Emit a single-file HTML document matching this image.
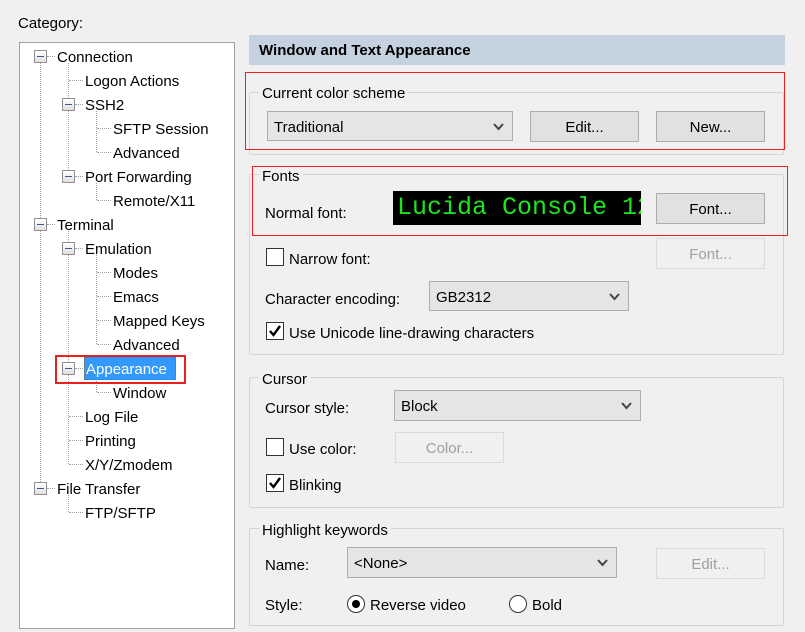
<!DOCTYPE html>
<html><head><meta charset="utf-8"><style>
*{margin:0;padding:0;box-sizing:border-box}
body{width:805px;height:632px;background:#f0f0f0;position:relative;overflow:hidden;font-family:"Liberation Sans","DejaVu Sans",sans-serif;font-size:15px;color:#000}
.a{position:absolute;white-space:nowrap}
.x{margin-top:2px}
.t{position:absolute;white-space:nowrap;line-height:20px;height:20px;margin-top:2px}
.vl{position:absolute;border-left:1px dotted #a0a0a0;width:0}
.hl{position:absolute;border-top:1px dotted #a0a0a0;height:0}
.mb{position:absolute;width:13px;height:13px;border:1px solid #919191;background:linear-gradient(#fff,#e0e0e0)}
.mb:after{content:"";position:absolute;left:2px;top:5px;width:7px;height:1px;background:#3c5a8c}
.grp{position:absolute;border:1px solid #d5d5d5;border-radius:2px}
.lg{position:absolute;background:#f0f0f0;padding:0 3px;line-height:18px;margin-top:2px}
.btn{position:absolute;border:1px solid #adadad;background:#e1e1e1;text-align:center;line-height:32px}
.dis{border-color:#dadada;background:#f0f0f0;color:#a0a0a0}
.cb{position:absolute;border:1px solid #adadad;background:#e5e5e5;line-height:32px;padding-left:6px}
.cb svg{position:absolute;right:8px;top:11px}
.ck{position:absolute;width:18px;height:18px;border:1px solid #333;background:#fff}
.red{position:absolute;border:1px solid #f02020}
</style></head><body>
<div class="a x" style="left:18px;top:12px;line-height:20px">Category:</div>
<div class="a" style="left:19px;top:42px;width:216px;height:587px;background:#fff;border:1px solid #a0a0a0"></div>

<div class="vl" style="left:40px;top:63px;height:425px"></div>
<div class="vl" style="left:68px;top:63px;height:113px"></div>
<div class="vl" style="left:68px;top:231px;height:233px"></div>
<div class="vl" style="left:96px;top:111px;height:41px"></div>
<div class="vl" style="left:96px;top:183px;height:17px"></div>
<div class="vl" style="left:96px;top:255px;height:89px"></div>
<div class="vl" style="left:96px;top:375px;height:17px"></div>
<div class="vl" style="left:68px;top:495px;height:17px"></div>
<div class="hl" style="left:47px;top:56px;width:8px"></div>
<div class="hl" style="left:69px;top:80px;width:14px"></div>
<div class="hl" style="left:75px;top:104px;width:8px"></div>
<div class="hl" style="left:97px;top:128px;width:14px"></div>
<div class="hl" style="left:97px;top:152px;width:14px"></div>
<div class="hl" style="left:75px;top:176px;width:8px"></div>
<div class="hl" style="left:97px;top:200px;width:14px"></div>
<div class="hl" style="left:47px;top:224px;width:8px"></div>
<div class="hl" style="left:75px;top:248px;width:8px"></div>
<div class="hl" style="left:97px;top:272px;width:14px"></div>
<div class="hl" style="left:97px;top:296px;width:14px"></div>
<div class="hl" style="left:97px;top:320px;width:14px"></div>
<div class="hl" style="left:97px;top:344px;width:14px"></div>
<div class="hl" style="left:75px;top:368px;width:8px"></div>
<div class="hl" style="left:97px;top:392px;width:14px"></div>
<div class="hl" style="left:69px;top:416px;width:14px"></div>
<div class="hl" style="left:69px;top:440px;width:14px"></div>
<div class="hl" style="left:69px;top:464px;width:14px"></div>
<div class="hl" style="left:47px;top:488px;width:8px"></div>
<div class="hl" style="left:69px;top:512px;width:14px"></div>
<div class="mb" style="left:34px;top:50px"></div>
<div class="mb" style="left:62px;top:98px"></div>
<div class="mb" style="left:62px;top:170px"></div>
<div class="mb" style="left:34px;top:218px"></div>
<div class="mb" style="left:62px;top:242px"></div>
<div class="mb" style="left:62px;top:362px"></div>
<div class="mb" style="left:34px;top:482px"></div>

<div class="t" style="left:57px;top:46px">Connection</div>
<div class="t" style="left:85px;top:70px">Logon Actions</div>
<div class="t" style="left:85px;top:94px">SSH2</div>
<div class="t" style="left:113px;top:118px">SFTP Session</div>
<div class="t" style="left:113px;top:142px">Advanced</div>
<div class="t" style="left:85px;top:166px">Port Forwarding</div>
<div class="t" style="left:113px;top:190px">Remote/X11</div>
<div class="t" style="left:57px;top:214px">Terminal</div>
<div class="t" style="left:85px;top:238px">Emulation</div>
<div class="t" style="left:113px;top:262px">Modes</div>
<div class="t" style="left:113px;top:286px">Emacs</div>
<div class="t" style="left:113px;top:310px">Mapped Keys</div>
<div class="t" style="left:113px;top:334px">Advanced</div>
<div class="a" style="left:84px;top:357px;width:92px;height:23px;background:#3399ff;border:1px dotted #a06020"></div>
<div class="t" style="left:86px;top:358px;color:#fff">Appearance</div>
<div class="a" style="left:55px;top:355px;width:131px;height:29px;border:2px solid #e82020"></div>
<div class="t" style="left:113px;top:382px">Window</div>
<div class="t" style="left:85px;top:406px">Log File</div>
<div class="t" style="left:85px;top:430px">Printing</div>
<div class="t" style="left:85px;top:454px">X/Y/Zmodem</div>
<div class="t" style="left:57px;top:478px">File Transfer</div>
<div class="t" style="left:85px;top:502px">FTP/SFTP</div>

<div class="a" style="left:249px;top:35px;width:536px;height:30px;background:#c4d1df;font-weight:bold;line-height:32px;padding-left:10px">Window and Text Appearance</div>

<div class="grp" style="left:249px;top:92px;width:535px;height:63px"></div>
<div class="lg" style="left:259px;top:83px">Current color scheme</div>
<div class="cb" style="left:267px;top:111px;width:246px;height:30px">Traditional<svg width="11" height="8"><path d="M1 1L5.5 6L10 1" fill="none" stroke="#444" stroke-width="2"/></svg></div>
<div class="btn" style="left:530px;top:111px;width:109px;height:31px">Edit...</div>
<div class="btn" style="left:656px;top:111px;width:109px;height:31px">New...</div>
<div class="red" style="left:245px;top:72px;width:540px;height:78px"></div>

<div class="grp" style="left:249px;top:174px;width:535px;height:181px"></div>
<div class="lg" style="left:259px;top:166px">Fonts</div>
<div class="a x" style="left:265px;top:202px;line-height:20px">Normal font:</div>
<div class="a" style="left:393px;top:191px;width:248px;height:34px;background:#000;color:#1ee61e;font-family:'Liberation Mono',monospace;font-size:25px;line-height:34px;padding-left:4px;overflow:hidden">Lucida Console 12</div>
<div class="btn" style="left:656px;top:193px;width:109px;height:31px">Font...</div>
<div class="red" style="left:252px;top:166px;width:536px;height:70px"></div>
<div class="ck" style="left:266px;top:248px"></div>
<div class="a x" style="left:289px;top:248px;line-height:20px">Narrow font:</div>
<div class="btn dis" style="left:656px;top:238px;width:109px;height:31px">Font...</div>
<div class="a x" style="left:265px;top:288px;line-height:20px">Character encoding:</div>
<div class="cb" style="left:429px;top:281px;width:200px;height:30px">GB2312<svg width="11" height="8"><path d="M1 1L5.5 6L10 1" fill="none" stroke="#444" stroke-width="2"/></svg></div>
<div class="ck" style="left:266px;top:322px"><svg width="16" height="16"><path d="M3 8L6.5 12L13 3" fill="none" stroke="#000" stroke-width="2.4"/></svg></div>
<div class="a x" style="left:289px;top:322px;line-height:20px">Use Unicode line-drawing characters</div>

<div class="grp" style="left:249px;top:377px;width:535px;height:131px"></div>
<div class="lg" style="left:259px;top:369px">Cursor</div>
<div class="a x" style="left:265px;top:397px;line-height:20px">Cursor style:</div>
<div class="cb" style="left:394px;top:390px;width:247px;height:31px">Block<svg width="11" height="8"><path d="M1 1L5.5 6L10 1" fill="none" stroke="#444" stroke-width="2"/></svg></div>
<div class="ck" style="left:266px;top:438px"></div>
<div class="a x" style="left:289px;top:438px;line-height:20px">Use color:</div>
<div class="btn dis" style="left:395px;top:432px;width:109px;height:31px">Color...</div>
<div class="ck" style="left:266px;top:474px"><svg width="16" height="16"><path d="M3 8L6.5 12L13 3" fill="none" stroke="#000" stroke-width="2.4"/></svg></div>
<div class="a x" style="left:289px;top:474px;line-height:20px">Blinking</div>

<div class="grp" style="left:249px;top:528px;width:535px;height:98px"></div>
<div class="lg" style="left:259px;top:520px">Highlight keywords</div>
<div class="a x" style="left:265px;top:554px;line-height:20px">Name:</div>
<div class="cb" style="left:347px;top:547px;width:270px;height:31px">&lt;None&gt;<svg width="11" height="8"><path d="M1 1L5.5 6L10 1" fill="none" stroke="#444" stroke-width="2"/></svg></div>
<div class="btn dis" style="left:656px;top:548px;width:109px;height:31px">Edit...</div>
<div class="a x" style="left:265px;top:594px;line-height:20px">Style:</div>
<div class="a" style="left:347px;top:595px;width:18px;height:18px;border:1px solid #333;border-radius:50%;background:#fff"><div style="position:absolute;left:4px;top:4px;width:8px;height:8px;border-radius:50%;background:#000"></div></div>
<div class="a x" style="left:370px;top:594px;line-height:20px">Reverse video</div>
<div class="a" style="left:509px;top:595px;width:18px;height:18px;border:1px solid #333;border-radius:50%;background:#fff"></div>
<div class="a x" style="left:532px;top:594px;line-height:20px">Bold</div>
</body></html>
